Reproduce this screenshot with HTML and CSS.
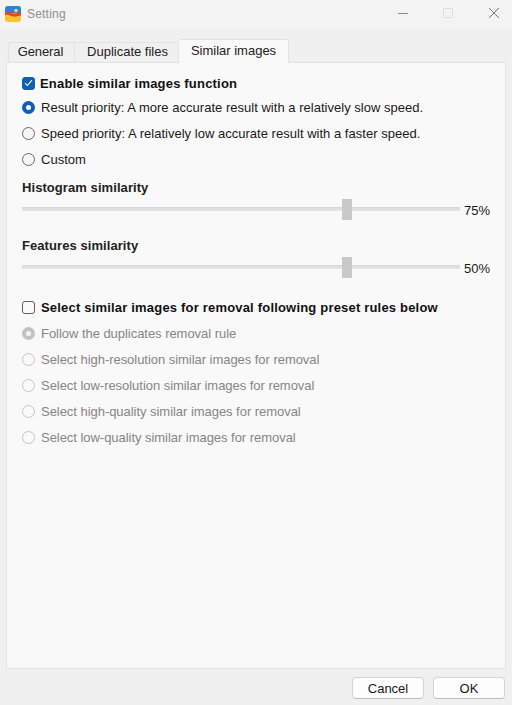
FILE: index.html
```html
<!DOCTYPE html>
<html lang="en">
<head>
<meta charset="utf-8">
<title>Setting</title>
<link rel="stylesheet" href="styles.css">
</head>
<body>
<div class="window">
  <header class="titlebar">
    <svg class="logo" width="16" height="16" viewBox="0 0 16 16">
      <rect x="0" y="0" width="16" height="16" rx="3" fill="#f9c22e"/>
      <path d="M0 3a3 3 0 0 1 3-3h10a3 3 0 0 1 3 3v4H0z" fill="#2f7fe0"/>
      <path d="M0 6c3-1.500 5 1 8 1.500 3 .5 5-1 8-1v3c-3 .5-5 1.500-8 1S3 8 0 9z" fill="#e8452c"/>
      <circle cx="11" cy="4.500" r="1.800" fill="#f5d94a"/>
    </svg>
    <span class="title">Setting</span>
    <div class="controls">
      <svg class="ctl" width="46" height="28" viewBox="0 0 46 28"><path d="M19 13.500h10" stroke="#8a8a8a" fill="none"/></svg>
      <svg class="ctl" width="46" height="28" viewBox="0 0 46 28"><rect x="18.500" y="8.500" width="9" height="9" rx="1" stroke="#dcdcdc" fill="none"/></svg>
      <svg class="ctl" width="41" height="28" viewBox="0 0 41 28"><path d="M18 8l10 10M28 8L18 18" stroke="#777" fill="none"/></svg>
    </div>
  </header>
  <nav class="tabs">
    <div class="tab tab-general">General</div>
    <div class="tab tab-dup">Duplicate files</div>
    <div class="tab tab-active">Similar images</div>
  </nav>
  <main class="panel">
    <label class="row row-first strong"><span class="check checked"><svg width="9" height="8" viewBox="0 0 9 8"><path d="M1 4l2.300 2.500L8 1.200" stroke="#fff" stroke-width="1.100" fill="none"/></svg></span><span>Enable similar images function</span></label>
    <label class="row"><span class="radio on"></span>Result priority: A more accurate result with a relatively slow speed.</label>
    <label class="row"><span class="radio"></span>Speed priority: A relatively low accurate result with a faster speed.</label>
    <label class="row"><span class="radio"></span>Custom</label>
    <div class="heading">Histogram similarity</div>
    <div class="slider-row">
      <div class="track"><span class="thumb"></span></div><span class="pct">75%</span>
    </div>
    <div class="heading heading-2">Features similarity</div>
    <div class="slider-row">
      <div class="track"><span class="thumb"></span></div><span class="pct">50%</span>
    </div>
    <label class="row row-select strong"><span class="check"></span>Select similar images for removal following preset rules below</label>
    <label class="row disabled row-follow"><span class="radio dis-on"></span>Follow the duplicates removal rule</label>
    <label class="row disabled"><span class="radio dis"></span>Select high-resolution similar images for removal</label>
    <label class="row disabled"><span class="radio dis"></span>Select low-resolution similar images for removal</label>
    <label class="row disabled"><span class="radio dis"></span>Select high-quality similar images for removal</label>
    <label class="row disabled"><span class="radio dis"></span>Select low-quality similar images for removal</label>
  </main>
  <footer class="actions">
    <button class="btn" type="button">Cancel</button>
    <button class="btn" type="button">OK</button>
  </footer>
</div>
</body>
</html>
```
FILE: styles.css
```css
* { box-sizing: border-box; }
html, body { margin: 0; padding: 0; }
body {
  width: 512px;
  height: 705px;
  overflow: hidden;
  background: #f0f0f0;
  color: #1a1a1a;
  font-family: "Liberation Sans", Arial, sans-serif;
  font-size: 13px;
}
.window { display: flex; flex-direction: column; height: 705px; }
.titlebar {
  display: flex;
  align-items: center;
  height: 28px;
  flex: none;
  padding-left: 5px;
  background: #f3f3f3;
}
.logo { flex: none; }
.title { margin-left: 6px; color: #8f8f8f; font-size: 12px; letter-spacing: .2px; }
.controls { display: flex; margin-left: auto; }
.ctl { display: block; }
.tabs {
  display: flex;
  align-items: flex-end;
  height: 34px;
  flex: none;
  padding-left: 8px;
  position: relative;
  z-index: 1;
}
.tab {
  display: flex;
  align-items: center;
  justify-content: center;
  height: 20px;
  background: #f0f0f0;
  border: 1px solid #e3e3e3;
  border-bottom: 0;
  color: #222;
  font-size: 13px;
  padding-bottom: 3px;
}
.tab-general { width: 67px; padding-right: 2px; border-radius: 3px 0 0 0; letter-spacing: -.1px; }
.tab-dup { width: 104px; padding-left: 2px; border-left: 0; }
.tab-active {
  width: 110px;
  height: 24px;
  margin-bottom: -1px;
  background: #f9f9f9;
  border-left: 0;
  border-radius: 2px 2px 0 0;
}
.panel {
  flex: none;
  width: 500px;
  height: 607px;
  margin-left: 6px;
  padding: 0 0 0 15px;
  background: #f9f9f9;
  border: 1px solid #e3e3e3;
}
.row {
  display: flex;
  align-items: center;
  height: 26px;
  white-space: nowrap;
  letter-spacing: .02px;
}
.row-first { height: 18px; margin-top: 11px; margin-bottom: 2px; }
.strong { font-weight: 700; color: #111; letter-spacing: .19px; }
.check {
  display: flex;
  align-items: center;
  justify-content: center;
  width: 13px;
  height: 13px;
  flex: none;
  margin-right: 5px;
  border: 1px solid #5f5f5f;
  border-radius: 3px;
  background: #fbfbfb;
}
.check.checked { background: #0f5fb5; border-color: #0f5fb5; }
.radio {
  width: 13px;
  height: 13px;
  flex: none;
  margin-right: 6px;
  border: 1px solid #6a6a6a;
  border-radius: 50%;
  background: #f6f6f6;
}
.radio.on { border: 4px solid #0f5fb5; background: #fff; }
.radio.dis { border-color: #c4c4c4; background: #fafafa; }
.radio.dis-on { border: 4px solid #c2c2c2; background: #f5f5f5; }
.disabled { color: #868686; letter-spacing: -.04px; }
.heading { height: 16px; margin-top: 8px; font-weight: 700; color: #222; line-height: 16px; letter-spacing: .07px; }
.heading-2 { margin-top: 18px; }
.slider-row { display: flex; align-items: center; height: 22px; margin-top: 2px; }
.track {
  position: relative;
  width: 438px;
  height: 4px;
  background: #e0e0e0;
  border-top: 1px solid #d8d8d8;
  border-bottom: 1px solid #e4e4e4;
}
.thumb {
  position: absolute;
  left: 320px;
  top: -9px;
  width: 10px;
  height: 21px;
  background: #c9c9c9;
}
.pct { margin-left: 4px; position: relative; top: 1px; }
.row-select { margin-top: 16px; }
.row-select .check { margin-right: 6px; }
.actions {
  display: flex;
  justify-content: flex-end;
  gap: 9px;
  padding: 8px 7px 0 0;
}
.btn {
  width: 72px;
  height: 22px;
  padding: 0;
  background: #fdfdfd;
  border: 1px solid #d4d4d4;
  border-bottom-color: #bcbcbc;
  border-radius: 4px;
  color: #1a1a1a;
  font-family: inherit;
  font-size: 13px;
}
```
